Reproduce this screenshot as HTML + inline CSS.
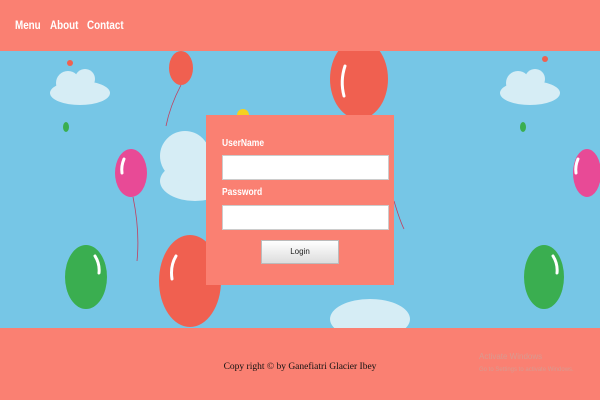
<!DOCTYPE html>
<html><head><style>
body{margin:0;width:600px;height:400px;overflow:hidden;position:relative;font-family:"Liberation Sans",sans-serif;background:#76c6e6}
.hdr{position:absolute;left:0;top:0;width:600px;height:51px;background:#fa8072}
.hdr span{position:absolute;top:18px;color:#fff;font-size:12px;font-weight:bold;transform:scaleX(0.82);transform-origin:left}
.ftr{position:absolute;left:0;top:328px;width:600px;height:72px;background:#fa8072}
.box{position:absolute;left:206px;top:115px;width:188px;height:170px;background:#fa8072}
.lbl{position:absolute;left:16px;color:#fff;font-size:10px;font-weight:bold;transform:scaleX(0.85);transform-origin:left}
.inp{position:absolute;left:16px;width:165px;height:23px;background:#fff;border:1px solid #ccc}
.btn{position:absolute;left:55px;top:125px;width:76px;height:22px;background:linear-gradient(#fff,#ddd);border:1px solid #bbb;font-size:8px;text-align:center;line-height:22px;color:#222}
</style></head><body>
<svg style="position:absolute;left:0;top:51px" width="600" height="277">
<g fill="#d6edf5">
<ellipse cx="80" cy="42" rx="30" ry="12"/><circle cx="68" cy="32" r="12"/><circle cx="85" cy="28" r="10"/>
<ellipse cx="530" cy="42" rx="30" ry="12"/><circle cx="518" cy="32" r="12"/><circle cx="535" cy="28" r="10"/>
<ellipse cx="195" cy="130" rx="35" ry="20"/><circle cx="185" cy="105" r="25"/>
<ellipse cx="370" cy="268" rx="40" ry="20"/>
</g>
<g fill="#f06050">
<ellipse cx="359" cy="28" rx="29" ry="40"/>
<ellipse cx="181" cy="17" rx="12" ry="17"/>
<ellipse cx="190" cy="230" rx="31" ry="46"/>
<circle cx="70" cy="12" r="3"/><circle cx="545" cy="8" r="3"/>
</g>
<g fill="#e84a96"><ellipse cx="131" cy="122" rx="16" ry="24"/><ellipse cx="587" cy="122" rx="14" ry="24"/></g>
<g fill="#3aae50"><ellipse cx="86" cy="226" rx="21" ry="32"/><ellipse cx="544" cy="226" rx="20" ry="32"/><ellipse cx="66" cy="76" rx="3" ry="5"/><ellipse cx="523" cy="76" rx="3" ry="5"/></g>
<circle cx="243" cy="64" r="6" fill="#f5d020"/>
<g stroke="#fff" fill="none" stroke-width="3" stroke-linecap="round"><path d="M345 15 Q340 30 344 45"/><path d="M176 205 Q170 215 172 228"/><path d="M124 108 Q121 115 122 122"/><path d="M578 108 Q575 115 576 122"/><path d="M95 205 Q100 213 99 222"/><path d="M553 205 Q558 213 557 222"/></g>
<g stroke="#c04060" fill="none" stroke-width="0.8"><path d="M133 146 Q140 180 137 210"/><path d="M181 34 Q170 55 166 75"/><path d="M394 150 Q400 170 404 178"/></g>
</svg>
<div class="hdr"><span style="left:15px">Menu</span><span style="left:50px">About</span><span style="left:87px">Contact</span></div>
<div class="box">
<div class="lbl" style="top:23px">UserName</div>
<div class="inp" style="top:40px"></div>
<div class="lbl" style="top:72px">Password</div>
<div class="inp" style="top:90px"></div>
<div class="btn">Login</div>
</div>
<div class="ftr">
<div style="position:absolute;left:0;width:600px;top:34px;text-align:center;font-family:'Liberation Serif',serif;font-size:9.5px;color:#111">Copy right © by Ganefiatri Glacier Ibey</div>
<div style="position:absolute;left:479px;top:24px;font-size:8px;color:#d89a90">Activate Windows</div>
<div style="position:absolute;left:479px;top:39px;font-size:6px;color:#d89a90">Go to Settings to activate Windows.</div>
</div>
</body></html>
